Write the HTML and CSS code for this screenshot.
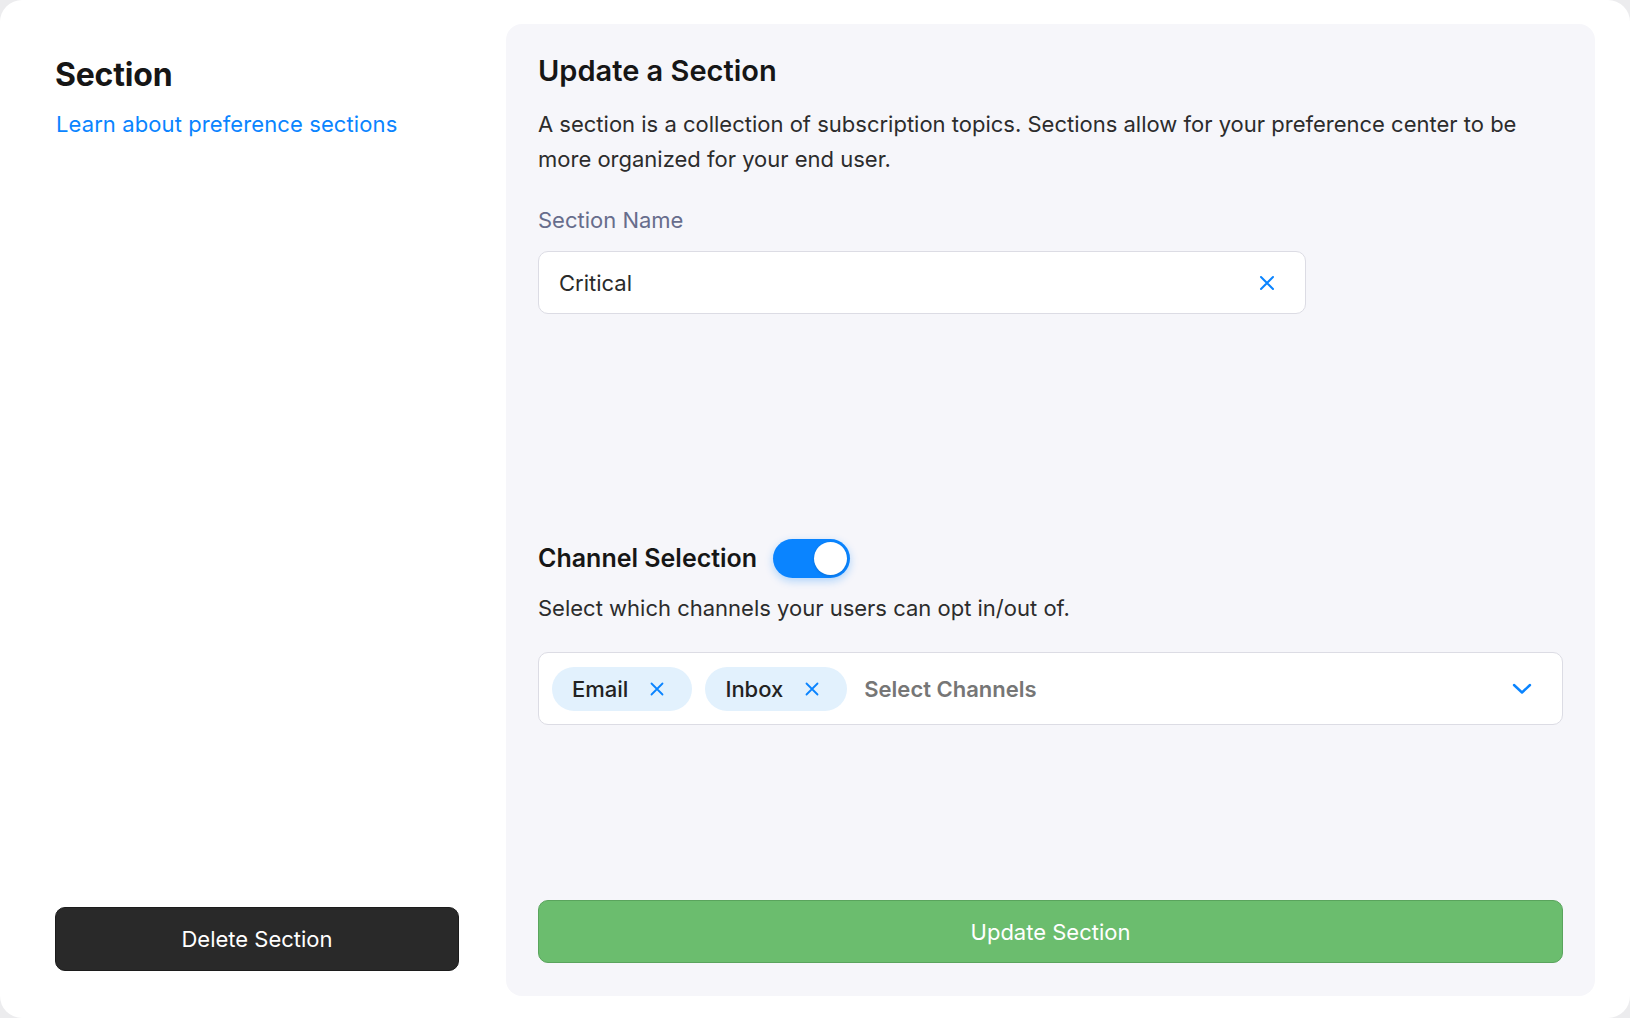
FILE: index.html
```html
<!DOCTYPE html>
<html lang="en">
<head>
<meta charset="utf-8">
<title>Update a Section</title>
<link rel="stylesheet" href="styles.css">
</head>
<body>
<div class="page">
  <aside class="side">
    <h1 class="side-title">Section</h1>
    <a class="side-link" href="#">Learn about preference sections</a>
    <button class="btn-delete" type="button">Delete Section</button>
  </aside>
  <main class="panel">
    <h2 class="panel-title">Update a Section</h2>
    <p class="panel-desc">A section is a collection of subscription topics. Sections allow for your preference center to be more organized for your end user.</p>
    <label class="field-label">Section Name</label>
    <div class="input">
      <span class="input-value">Critical</span>
      <svg class="input-clear" width="16" height="16" viewBox="0 0 16 16"><path d="M2 2L14 14M14 2L2 14" stroke="#0a84ff" stroke-width="2" stroke-linecap="round" fill="none"/></svg>
    </div>
    <div class="channel-head">
      <h3 class="channel-title">Channel Selection</h3>
      <span class="toggle"><span class="knob"></span></span>
    </div>
    <p class="channel-desc">Select which channels your users can opt in/out of.</p>
    <div class="multiselect">
      <span class="chip"><span class="chip-text">Email</span><svg class="chip-x" width="14" height="14" viewBox="0 0 14 14"><path d="M1.5 1.5L12.5 12.5M12.5 1.5L1.5 12.5" stroke="#0a84ff" stroke-width="1.8" stroke-linecap="round" fill="none"/></svg></span>
      <span class="chip"><span class="chip-text">Inbox</span><svg class="chip-x" width="14" height="14" viewBox="0 0 14 14"><path d="M1.5 1.5L12.5 12.5M12.5 1.5L1.5 12.5" stroke="#0a84ff" stroke-width="1.8" stroke-linecap="round" fill="none"/></svg></span>
      <span class="placeholder">Select Channels</span>
      <svg class="chevron" width="20" height="12" viewBox="0 0 20 12"><path d="M2 2L10 9.5L18 2" stroke="#0a84ff" stroke-width="2.4" stroke-linecap="round" stroke-linejoin="round" fill="none"/></svg>
    </div>
    <button class="btn-update" type="button">Update Section</button>
  </main>
</div>
</body>
</html>
```

FILE: styles.css
```css
html, body {
  margin: 0;
  padding: 0;
  height: 100%;
  background: #ececee;
}
body {
  font-family: Inter, "Noto Sans", sans-serif;
  color: #1a1a1a;
}
.page {
  box-sizing: border-box;
  height: 1018px;
  background: #ffffff;
  border-radius: 22px;
  display: flex;
  gap: 48px;
  padding: 24px 35px 22px 55px;
}
.side {
  width: 403px;
  flex: none;
  display: flex;
  flex-direction: column;
  align-items: flex-start;
  padding: 31px 0 25px;
}
.side-title {
  margin: 0;
  font-size: 32px;
  line-height: 40px;
  font-weight: 700;
  color: #161616;
  letter-spacing: -0.2px;
}
.side-link {
  margin-top: 15px;
  font-size: 22px;
  line-height: 28px;
  color: #0a84ff;
  text-decoration: none;
  padding-left: 1px;
  letter-spacing: 0.1px;
}
.btn-delete {
  margin-top: auto;
  width: 404px;
  height: 64px;
  border: 1px solid #1c1c1c;
  border-radius: 10px;
  background: #292929;
  color: #ffffff;
  font-family: inherit;
  font-size: 22px;
}
.panel {
  flex: 1;
  min-width: 0;
  background: #f6f6fa;
  border-radius: 16px;
  padding: 30px 32px 33px;
  display: flex;
  flex-direction: column;
  align-items: flex-start;
}
.panel-title {
  margin: 0;
  font-size: 29px;
  line-height: 34px;
  font-weight: 600;
  color: #161616;
}
.panel-desc {
  margin: 19px 0 0;
  font-size: 22px;
  line-height: 35px;
  color: #2c2c2c;
}
.field-label {
  margin-top: 29px;
  font-size: 22px;
  line-height: 28px;
  color: #676d8c;
}
.input {
  box-sizing: border-box;
  margin-top: 17px;
  width: 768px;
  height: 63px;
  background: #ffffff;
  border: 1px solid #dcdce4;
  border-radius: 10px;
  display: flex;
  align-items: center;
  justify-content: space-between;
  padding: 0 30px 0 20px;
}
.input-value {
  font-size: 22px;
  color: #2a2a2a;
}
.input-clear {
  width: 16px;
  height: 16px;
}
.channel-head {
  margin-top: 225px;
  display: flex;
  align-items: center;
  gap: 16px;
}
.channel-title {
  margin: 0;
  font-size: 25px;
  line-height: 39px;
  font-weight: 600;
  color: #161616;
}
.toggle {
  box-sizing: border-box;
  width: 77px;
  height: 39px;
  border-radius: 20px;
  background: #0a84ff;
  display: flex;
  align-items: center;
  justify-content: flex-end;
  padding: 0 3px;
  box-shadow: 0 3px 8px rgba(10, 132, 255, 0.3);
}
.knob {
  width: 33px;
  height: 33px;
  border-radius: 50%;
  background: #ffffff;
  box-shadow: 0 1px 3px rgba(0, 0, 0, 0.15);
}
.channel-desc {
  margin: 15px 0 0;
  font-size: 22px;
  line-height: 30px;
  color: #2c2c2c;
}
.multiselect {
  box-sizing: border-box;
  margin-top: 29px;
  width: 100%;
  height: 73px;
  background: #ffffff;
  border: 1px solid #dcdce4;
  border-radius: 10px;
  display: flex;
  align-items: center;
  padding: 0 30px 0 13px;
  gap: 13px;
}
.chip {
  box-sizing: border-box;
  height: 44px;
  border-radius: 22px;
  background: #e2f1fd;
  display: flex;
  align-items: center;
  gap: 22px;
  padding: 0 28px 0 20px;
}
.chip-text {
  font-size: 22px;
  font-weight: 500;
  color: #222222;
}
.chip-x {
  width: 14px;
  height: 14px;
}
.placeholder {
  margin-left: 4px;
  font-size: 22px;
  font-weight: 600;
  color: #767676;
}
.chevron {
  margin-left: auto;
}
.btn-update {
  margin-top: auto;
  width: 100%;
  height: 63px;
  border: 1px solid #5aa45d;
  border-radius: 10px;
  background: #6bbd6e;
  color: #ffffff;
  font-family: inherit;
  font-size: 22px;
}
```
